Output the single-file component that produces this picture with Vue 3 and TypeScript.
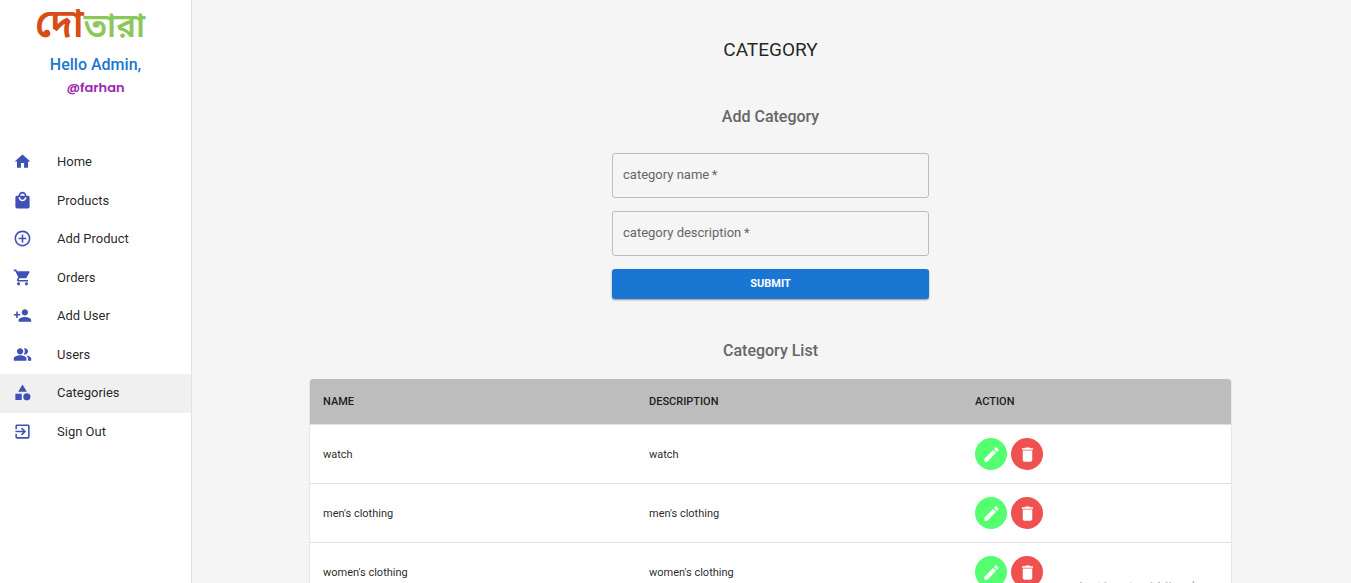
<script setup lang="ts">
import { ref } from 'vue'

interface NavItem {
  label: string
  path: string
}

interface Category {
  name: string
  description: string
}

const navItems: NavItem[] = [
  { label: 'Home', path: 'M10 20v-6h4v6h5v-8h3L12 3 2 12h3v8z' },
  {
    label: 'Products',
    path: 'M19 6h-2c0-2.76-2.24-5-5-5S7 3.24 7 6H5c-1.1 0-1.99.9-1.99 2L3 20c0 1.1.9 2 2 2h14c1.1 0 2-.9 2-2V8c0-1.1-.9-2-2-2zm-7-3c1.66 0 3 1.34 3 3H9c0-1.66 1.34-3 3-3zm0 10c-2.76 0-5-2.24-5-5h2c0 1.66 1.34 3 3 3s3-1.34 3-3h2c0 2.76-2.24 5-5 5z',
  },
  {
    label: 'Add Product',
    path: 'M13 7h-2v4H7v2h4v4h2v-4h4v-2h-4V7zm-1-5C6.48 2 2 6.48 2 12s4.48 10 10 10 10-4.48 10-10S17.52 2 12 2zm0 18c-4.41 0-8-3.59-8-8s3.59-8 8-8 8 3.59 8 8-3.59 8-8 8z',
  },
  {
    label: 'Orders',
    path: 'M7 18c-1.1 0-1.99.9-1.99 2S5.9 22 7 22s2-.9 2-2-.9-2-2-2zM1 2v2h2l3.6 7.59-1.35 2.45c-.16.28-.25.61-.25.96 0 1.1.9 2 2 2h12v-2H7.42c-.14 0-.25-.11-.25-.25l.03-.12.9-1.63h7.45c.75 0 1.41-.41 1.75-1.03l3.58-6.49c.08-.14.12-.31.12-.48 0-.55-.45-1-1-1H5.21l-.94-2H1zm16 16c-1.1 0-1.99.9-1.99 2s.89 2 1.99 2 2-.9 2-2-.9-2-2-2z',
  },
  {
    label: 'Add User',
    path: 'M15 12c2.21 0 4-1.79 4-4s-1.79-4-4-4-4 1.79-4 4 1.79 4 4 4zm-9-2V7H4v3H1v2h3v3h2v-3h3v-2H6zm9 4c-2.67 0-8 1.34-8 4v2h16v-2c0-2.66-5.33-4-8-4z',
  },
  {
    label: 'Users',
    path: 'M16.67 13.13C18.04 14.06 19 15.32 19 17v3h4v-3c0-2.18-3.57-3.47-6.33-3.87zM15 12c2.21 0 4-1.79 4-4s-1.79-4-4-4c-.47 0-.91.1-1.33.24C14.5 5.27 15 6.58 15 8s-.5 2.73-1.33 3.76c.42.14.86.24 1.33.24zM9 12c2.21 0 4-1.79 4-4s-1.79-4-4-4-4 1.79-4 4 1.79 4 4 4zm0 1c-2.67 0-8 1.34-8 4v3h16v-3c0-2.66-5.33-4-8-4z',
  },
  {
    label: 'Categories',
    path: 'M12 2l-5.5 9h11zM17.5 13a4.5 4.5 0 1 0 0 9 4.5 4.5 0 0 0 0-9zM3 13.5h8v8H3z',
  },
  {
    label: 'Sign Out',
    path: 'M10.09 15.59L11.5 17l5-5-5-5-1.41 1.41L12.67 11H3v2h9.67l-2.58 2.59zM19 3H5c-1.11 0-2 .9-2 2v4h2V5h14v14H5v-4H3v4c0 1.1.89 2 2 2h14c1.1 0 2-.9 2-2V5c0-1.1-.9-2-2-2z',
  },
]

const active = ref('Categories')
const name = ref('')
const description = ref('')

const categories = ref<Category[]>([
  { name: 'watch', description: 'watch' },
  { name: "men's clothing", description: "men's clothing" },
  { name: "women's clothing", description: "women's clothing" },
])

function submit() {
  if (!name.value || !description.value) return
  categories.value.push({ name: name.value, description: description.value })
  name.value = ''
  description.value = ''
}

function remove(index: number) {
  categories.value.splice(index, 1)
}
</script>

<template>
  <div class="layout">
    <aside class="sidebar">
      <div class="brand">
        <a class="logo" href="#"><span class="logo-first">দো</span><span class="logo-rest">তারা</span></a>
        <p class="hello">Hello Admin,</p>
        <p class="user">@farhan</p>
      </div>
      <nav class="nav">
        <a
          v-for="item in navItems"
          :key="item.label"
          href="#"
          class="nav-item"
          :class="{ selected: item.label === active }"
          @click.prevent="active = item.label"
        >
          <svg class="nav-icon" viewBox="0 0 24 24" aria-hidden="true"><path :d="item.path" /></svg>
          <span>{{ item.label }}</span>
        </a>
      </nav>
    </aside>

    <main class="main">
      <h1 class="title">CATEGORY</h1>
      <h2 class="subtitle">Add Category</h2>
      <form class="form" novalidate @submit.prevent="submit">
        <div class="field">
          <input id="category-name" v-model="name" type="text" required />
          <label v-show="!name" for="category-name">category name&thinsp;*</label>
        </div>
        <div class="field">
          <input id="category-description" v-model="description" type="text" required />
          <label v-show="!description" for="category-description">category description&thinsp;*</label>
        </div>
        <button class="submit" type="submit">SUBMIT</button>
      </form>

      <h2 class="subtitle list-title">Category List</h2>
      <div class="paper">
        <table class="table">
          <thead>
            <tr>
              <th class="wide" scope="col">NAME</th>
              <th class="wide" scope="col">DESCRIPTION</th>
              <th scope="col">ACTION</th>
            </tr>
          </thead>
          <tbody>
            <tr v-for="(category, index) in categories" :key="category.name">
              <td>{{ category.name }}</td>
              <td>{{ category.description }}</td>
              <td>
                <div class="actions">
                  <button class="round edit" type="button" :aria-label="`Edit ${category.name}`">
                    <svg viewBox="0 0 24 24" aria-hidden="true">
                      <path d="M3 17.25V21h3.75L17.81 9.94l-3.75-3.75L3 17.25zM20.71 7.04c.39-.39.39-1.02 0-1.41l-2.34-2.34c-.39-.39-1.02-.39-1.41 0l-1.83 1.83 3.75 3.75 1.83-1.83z" />
                    </svg>
                  </button>
                  <button class="round delete" type="button" :aria-label="`Delete ${category.name}`" @click="remove(index)">
                    <svg viewBox="0 0 24 24" aria-hidden="true">
                      <path d="M6 19c0 1.1.9 2 2 2h8c1.1 0 2-.9 2-2V7H6v12zM19 4h-3.5l-1-1h-5l-1 1H5v2h14V4z" />
                    </svg>
                  </button>
                </div>
              </td>
            </tr>
          </tbody>
        </table>
      </div>
    </main>

    <div class="watermark">Activate Windows</div>
  </div>
</template>

<style>
body {
  margin: 0;
  background: #f5f5f5;
}
</style>

<style scoped>
.layout {
  display: flex;
  min-height: 100vh;
  font-family: Roboto, 'Liberation Sans', sans-serif;
  font-size: 13px;
  color: rgba(0, 0, 0, 0.87);
}

.sidebar {
  box-sizing: border-box;
  flex: 0 0 192px;
  background: #fff;
  border-right: 1px solid #e0e0e0;
}

.brand {
  display: flex;
  flex-direction: column;
  align-items: center;
  padding-bottom: 44px;
}

.logo {
  height: 53px;
  line-height: 54px;
  margin-right: 11px;
  font-family: 'Noto Sans Bengali', 'Noto Serif Bengali', sans-serif;
  font-weight: 600;
  text-decoration: none;
  white-space: nowrap;
}

.logo-first {
  font-size: 40px;
  color: #d84d16;
}

.logo-rest {
  font-size: 33px;
  color: #8bc85a;
}

.hello {
  margin: 0;
  font-size: 16px;
  font-weight: 500;
  line-height: 24px;
  color: #1976d2;
}

.user {
  margin: 0;
  font-family: Poppins, Inter, sans-serif;
  font-size: 13px;
  font-weight: 600;
  line-height: 22px;
  color: #9c27b0;
}

.nav-item {
  display: flex;
  align-items: center;
  gap: 25px;
  padding: 9px 13px 10px;
  line-height: 1.5;
  color: inherit;
  text-decoration: none;
}

.nav-item.selected {
  background: #f0f0f0;
}

.nav-icon {
  width: 19px;
  height: 19px;
  fill: #3f51b5;
}

.main {
  flex: 1;
  min-width: 0;
  display: flex;
  flex-direction: column;
  align-items: center;
  padding: 38px 21px 38px 19px;
}

.title {
  margin: 0 0 43px;
  font-size: 19px;
  font-weight: 400;
  line-height: 24px;
}

.subtitle {
  margin: 0;
  font-size: 16px;
  font-weight: 500;
  line-height: 24px;
  color: #666;
}

.form {
  box-sizing: border-box;
  display: flex;
  flex-direction: column;
  gap: 13px;
  width: 100%;
  max-width: 317px;
  margin: 24px 0 40px;
}

.field {
  display: grid;
  align-items: center;
}

.field > * {
  grid-area: 1 / 1;
}

.field input {
  box-sizing: border-box;
  width: 100%;
  height: 45px;
  padding: 0 11px;
  font: inherit;
  color: inherit;
  background: transparent;
  border: 1px solid #bcbcbc;
  border-radius: 3px;
}

.field label {
  padding: 0 11px;
  line-height: 20px;
  margin-bottom: 2px;
  color: #666;
  pointer-events: none;
}

.submit {
  height: 30px;
  padding: 0 0 2px;
  border: 0;
  border-radius: 3px;
  background: #1976d2;
  color: #fff;
  font-family: inherit;
  font-size: 11px;
  font-weight: 700;
  box-shadow: 0 1px 2px rgba(0, 0, 0, 0.4);
}

.list-title {
  margin-bottom: 16px;
}

.paper {
  width: 100%;
  max-width: 921px;
  background: #fff;
  border-radius: 3px;
  box-shadow: 0 1px 2px rgba(0, 0, 0, 0.2);
  overflow: hidden;
}

.table {
  width: 100%;
  table-layout: fixed;
  border-spacing: 0;
  font-size: 11px;
}

.table th,
.table td {
  padding: 12px 13px;
  text-align: left;
  border-bottom: 1px solid #e0e0e0;
}

.table th {
  height: 21px;
  font-weight: 500;
  background: #bdbdbd;
}

.table td {
  height: 34px;
}

.wide {
  width: 300px;
}

.actions {
  display: flex;
  gap: 4px;
}

.round {
  display: grid;
  place-items: center;
  width: 32px;
  height: 32px;
  padding: 0;
  border: 0;
  border-radius: 50%;
}

.round svg {
  width: 19px;
  height: 19px;
  fill: #fff;
}

.edit {
  background: #54ff70;
}

.delete {
  background: #ef5050;
}

.watermark {
  position: fixed;
  right: 120px;
  bottom: 0;
  height: 4px;
  overflow: hidden;
  font-family: 'Open Sans', sans-serif;
  font-size: 19px;
  line-height: 18px;
  color: #b8b8b8;
  pointer-events: none;
}
</style>
